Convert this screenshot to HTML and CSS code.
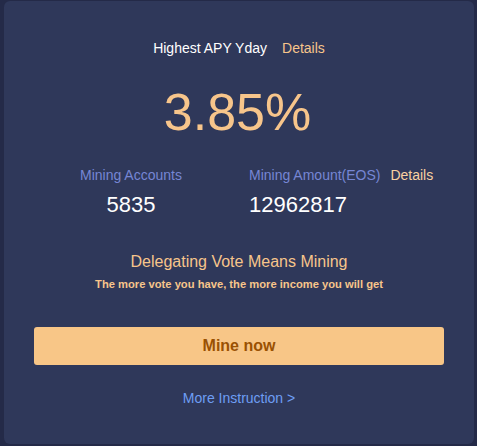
FILE: index.html
```html
<!DOCTYPE html>
<html>
<head>
<meta charset="utf-8">
<link rel="stylesheet" href="styles.css">
</head>
<body>
<div class="card">
  <div class="head">
    <span class="head-title">Highest APY Yday</span>
    <span class="link-peach">Details</span>
  </div>
  <div class="apy">3.85%</div>
  <div class="stats">
    <div class="stat stat-left">
      <div class="stat-label">Mining Accounts</div>
      <div class="stat-value">5835</div>
    </div>
    <div class="stat stat-right">
      <div class="stat-label">Mining Amount(EOS) <span class="link-peach details-sm">Details</span></div>
      <div class="stat-value">12962817</div>
    </div>
  </div>
  <div class="slogan">Delegating Vote Means Mining</div>
  <div class="sub">The more vote you have, the more income you will get</div>
  <button class="mine-btn">Mine now</button>
  <div class="more">More Instruction &gt;</div>
</div>
</body>
</html>
```

FILE: styles.css
```css
html, body {
  margin: 0;
  padding: 0;
}
body {
  background: #242a48;
  font-family: Arial, "Liberation Sans", sans-serif;
  width: 477px;
  height: 446px;
  overflow: hidden;
}
.card {
  margin: 1px 3px 0 4px;
  height: 443px;
  box-sizing: border-box;
  background: #2f385a;
  border-radius: 6px;
  padding-top: 37px;
  display: flex;
  flex-direction: column;
  align-items: center;
}
.head {
  font-size: 14px;
  line-height: 20px;
  color: #ffffff;
  display: flex;
  gap: 15px;
}
.link-peach {
  color: #f7c58b;
}
.apy {
  margin-top: 28px;
  font-size: 52px;
  line-height: 52px;
  color: #f7c58b;
  margin-left: -3px;
}
.stats {
  margin-top: 27px;
  width: 100%;
  display: flex;
}
.stat-left {
  width: 106px;
  margin-left: 74px;
  text-align: center;
}
.stat-right {
  margin-left: 65px;
}
.stat-label {
  font-size: 14px;
  line-height: 20px;
  color: #7686d4;
  white-space: nowrap;
}
.details-sm {
  margin-left: 6px;
  color: #f9d2a2;
}
.stat-value {
  margin-top: 7px;
  font-size: 22px;
  line-height: 26px;
  color: #ffffff;
}
.slogan {
  margin-top: 34px;
  font-size: 16px;
  line-height: 20px;
  color: #f7c58b;
}
.sub {
  margin-top: 4px;
  font-size: 11.2px;
  line-height: 16px;
  font-weight: bold;
  color: #f7c58b;
}
.mine-btn {
  margin-top: 35px;
  width: 410px;
  height: 38px;
  flex: none;
  border: none;
  border-radius: 3px;
  background: #f8c687;
  color: #9a5102;
  font-family: Arial, "Liberation Sans", sans-serif;
  font-size: 16px;
  font-weight: bold;
  padding: 0;
}
.more {
  margin-top: 23px;
  font-size: 14px;
  line-height: 20px;
  color: #6e9ef4;
}
```
